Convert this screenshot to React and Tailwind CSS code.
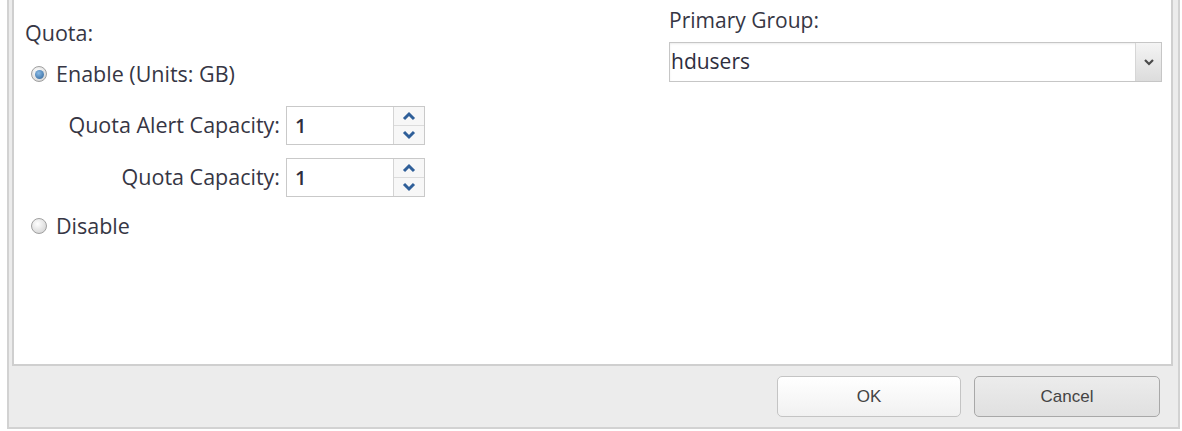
import React from "react";

function Radio({ checked }) {
  return (
    <span className="relative inline-flex h-[16px] w-[16px] items-center justify-center rounded-full border border-[#a0a0a0] bg-[radial-gradient(circle_at_40%_35%,#ffffff,#cccccc)]">
      {checked && (
        <span className="h-[9px] w-[9px] rounded-full bg-[radial-gradient(circle_at_40%_35%,#8abbe6,#2a5f96)]" />
      )}
    </span>
  );
}

function Spinner({ value }) {
  return (
    <div className="flex h-[39px] w-[139px] border border-[#c9c9c9] bg-white">
      <div className="flex flex-1 items-center pl-[8px] text-[20px] font-semibold text-[#2e2e3e]">{value}</div>
      <div className="flex w-[31px] flex-col border-l border-[#d4d4d4] bg-[#f7f7f7]">
        <div className="flex flex-1 items-center justify-center border-b border-[#dcdcdc]">
          <svg width="14" height="10" viewBox="0 0 14 10">
            <path d="M2 8 L7 3 L12 8" fill="none" stroke="#2f5f99" strokeWidth="3" />
          </svg>
        </div>
        <div className="flex flex-1 items-center justify-center">
          <svg width="14" height="10" viewBox="0 0 14 10">
            <path d="M2 2 L7 7 L12 2" fill="none" stroke="#2f5f99" strokeWidth="3" />
          </svg>
        </div>
      </div>
    </div>
  );
}

export default function App() {
  return (
    <div
      className="h-[431px] w-[1182px] overflow-hidden bg-white text-[#363644]"
      style={{ fontFamily: '"Open Sans", "Liberation Sans", sans-serif' }}
    >
      <div className="ml-[7px] mr-[2px] flex h-[429px] flex-col border-b-2 border-l-2 border-r-2 border-[#d2d2d2] bg-[#ececec]">
        <div className="ml-[3px] mr-[5px] flex h-[366px] border-b-2 border-l-2 border-r-2 border-[#cfcfcf] bg-white">
          <div className="flex w-[645px] flex-col pl-[11px] pt-[19px] text-[21.5px]">
            <div className="leading-[28px]">Quota:</div>
            <label className="mt-[13px] flex h-[28px] items-center gap-[9px] pl-[6px]">
              <Radio checked />
              <span>Enable (Units: GB)</span>
            </label>
            <div className="mt-[18px] flex flex-col gap-[13px]">
              <div className="flex items-center">
                <span className="w-[261px] pr-[6px] text-right">Quota Alert Capacity:</span>
                <Spinner value="1" />
              </div>
              <div className="flex items-center">
                <span className="w-[261px] pr-[6px] text-right">Quota Capacity:</span>
                <Spinner value="1" />
              </div>
            </div>
            <label className="mt-[15px] flex h-[28px] items-center gap-[9px] pl-[6px]">
              <Radio />
              <span>Disable</span>
            </label>
          </div>
          <div className="flex flex-1 flex-col pl-[10px] pr-[9px] pt-[6px] text-[21px]">
            <div className="leading-[28px]">Primary Group:</div>
            <div className="mt-[8px] flex h-[40px] border border-[#c6c6c6] bg-white shadow-[inset_0_1px_2px_rgba(0,0,0,0.08)]">
              <div className="flex flex-1 items-center pl-[1px] text-[#2e2e3e]">hdusers</div>
              <div className="flex w-[26px] items-center justify-center border-l border-[#d6d6d6] bg-gradient-to-b from-[#f4f4f4] to-[#dcdcdc]">
                <svg width="12" height="8" viewBox="0 0 12 8">
                  <path d="M2 2 L6 6 L10 2" fill="none" stroke="#4a4a4a" strokeWidth="2.2" />
                </svg>
              </div>
            </div>
          </div>
        </div>
        <div className="flex flex-1 items-start justify-end gap-[13px] pr-[18px] pt-[10px]">
          <button className="h-[41px] w-[184px] rounded-[5px] border border-[#c4c4c4] bg-gradient-to-b from-[#ffffff] to-[#f1f1f1] text-[17px] text-[#444]" style={{ fontFamily: '"Liberation Sans", sans-serif' }}>
            OK
          </button>
          <button className="h-[41px] w-[186px] rounded-[5px] border border-[#a8a8a8] bg-gradient-to-b from-[#ececec] to-[#e0e0e0] text-[17px] text-[#444]" style={{ fontFamily: '"Liberation Sans", sans-serif' }}>
            Cancel
          </button>
        </div>
      </div>
    </div>
  );
}
